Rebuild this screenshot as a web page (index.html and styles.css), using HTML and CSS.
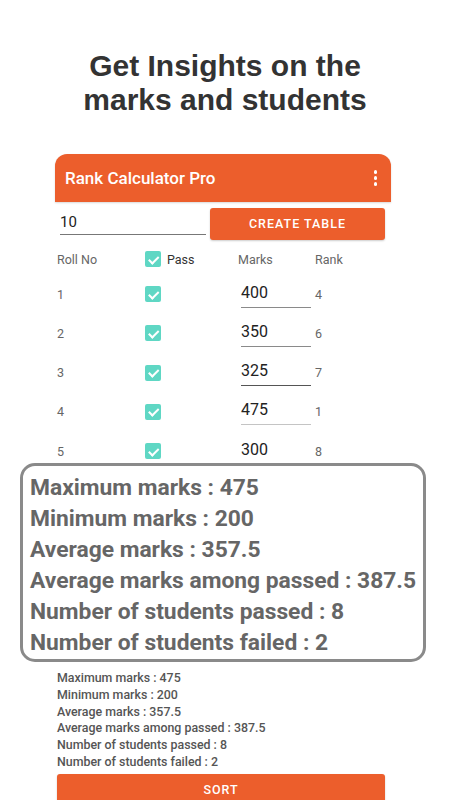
FILE: index.html
```html
<!DOCTYPE html>
<html>
<head>
<meta charset="utf-8">
<link rel="stylesheet" href="styles.css">
</head>
<body>
<h1 class="headline">Get Insights on the<br>marks and students</h1>
<div class="phone">
  <div class="appbar">
    <span class="app-title">Rank Calculator Pro</span>
    <span class="menu-dots"><i></i><i></i><i></i></span>
  </div>
  <div class="content">
    <div class="input-row">
      <div class="count-field">10</div>
      <div class="btn btn-create">CREATE TABLE</div>
    </div>
    <div class="table">
      <div class="trow thead">
        <span class="cell roll">Roll No</span>
        <span class="cell pass"><span class="check"></span><span class="pass-label">Pass</span></span>
        <span class="cell marks-h">Marks</span>
        <span class="cell rank">Rank</span>
      </div>
      <div class="trow"><span class="cell roll">1</span><span class="cell pass"><span class="check"></span></span><span class="cell marks"><span class="mark-field">400</span></span><span class="cell rank">4</span></div>
      <div class="trow"><span class="cell roll">2</span><span class="cell pass"><span class="check"></span></span><span class="cell marks"><span class="mark-field">350</span></span><span class="cell rank">6</span></div>
      <div class="trow"><span class="cell roll">3</span><span class="cell pass"><span class="check"></span></span><span class="cell marks"><span class="mark-field dark">325</span></span><span class="cell rank">7</span></div>
      <div class="trow"><span class="cell roll">4</span><span class="cell pass"><span class="check"></span></span><span class="cell marks"><span class="mark-field light">475</span></span><span class="cell rank">1</span></div>
      <div class="trow"><span class="cell roll">5</span><span class="cell pass"><span class="check"></span></span><span class="cell marks"><span class="mark-field">300</span></span><span class="cell rank">8</span></div>
      <div class="trow"><span class="cell roll">6</span><span class="cell pass"><span class="check"></span></span><span class="cell marks"><span class="mark-field">450</span></span><span class="cell rank">2</span></div>
      <div class="trow"><span class="cell roll">7</span><span class="cell pass"><span class="check"></span></span><span class="cell marks"><span class="mark-field">425</span></span><span class="cell rank">3</span></div>
      <div class="trow"><span class="cell roll">8</span><span class="cell pass"><span class="check"></span></span><span class="cell marks"><span class="mark-field">375</span></span><span class="cell rank">5</span></div>
      <div class="trow"><span class="cell roll">9</span><span class="cell pass"><span class="check off"></span></span><span class="cell marks"><span class="mark-field">275</span></span><span class="cell rank">9</span></div>
      <div class="trow"><span class="cell roll">10</span><span class="cell pass"><span class="check off"></span></span><span class="cell marks"><span class="mark-field">200</span></span><span class="cell rank">10</span></div>
    </div>
    <div class="stats">
      <div>Maximum marks : 475</div>
      <div>Minimum marks : 200</div>
      <div>Average marks : 357.5</div>
      <div>Average marks among passed : 387.5</div>
      <div>Number of students passed : 8</div>
      <div>Number of students failed : 2</div>
    </div>
    <div class="btn btn-sort">SORT</div>
  </div>
</div>
<div class="zoom-box">
  <div>Maximum marks : 475</div>
  <div>Minimum marks : 200</div>
  <div>Average marks : 357.5</div>
  <div>Average marks among passed : 387.5</div>
  <div>Number of students passed : 8</div>
  <div>Number of students failed : 2</div>
</div>
</body>
</html>
```
FILE: styles.css
```css
html, body {
  margin: 0;
  padding: 0;
  background: #ffffff;
}
body {
  width: 450px;
  height: 800px;
  overflow: hidden;
  position: relative;
  font-family: Roboto, "Noto Sans", sans-serif;
}
.headline {
  margin: 0;
  padding-top: 49px;
  font-family: "Liberation Sans", Arial, sans-serif;
  font-weight: bold;
  font-size: 30px;
  line-height: 34px;
  color: #333333;
  text-align: center;
}
.phone {
  margin: 37px 0 0 55px;
  width: 336px;
  background: #ffffff;
}
.appbar {
  height: 48px;
  background: #ec5e2c;
  border-radius: 12px 12px 0 0;
  display: flex;
  align-items: center;
  justify-content: space-between;
  padding: 0 14px 0 10px;
  box-shadow: 0 1px 2px rgba(0,0,0,0.15);
}
.app-title {
  color: #ffffff;
  font-size: 17px;
  font-weight: 500;
}
.menu-dots {
  display: flex;
  flex-direction: column;
  gap: 2.5px;
}
.menu-dots i {
  display: block;
  width: 3.5px;
  height: 3.5px;
  border-radius: 50%;
  background: #ffffff;
}
.input-row {
  display: flex;
  align-items: flex-start;
  margin-top: 6px;
  height: 32px;
}
.count-field {
  margin-left: 5px;
  width: 146px;
  height: 26px;
  border-bottom: 1px solid #777777;
  font-size: 15px;
  line-height: 28px;
  color: #222222;
}
.btn {
  background: #ec5e2c;
  color: #ffffff;
  font-weight: 500;
  text-align: center;
  border-radius: 3px;
  box-shadow: 0 1px 2px rgba(0,0,0,0.2);
}
.btn-create {
  margin-left: 4px;
  width: 175px;
  height: 32px;
  line-height: 32px;
  font-size: 12.5px;
  letter-spacing: 1px;
}
.table {
  margin-top: 4px;
}
.trow {
  display: grid;
  grid-template-columns: 88px 93px 77px 1fr;
  padding-left: 2px;
  height: 39.25px;
  align-items: center;
  font-size: 12.5px;
  color: #666666;
}
.thead {
  height: 30.5px;
}
.cell {
  display: flex;
  align-items: center;
}
.check {
  display: block;
  width: 16px;
  height: 16px;
  border-radius: 2px;
  background: #5fd7c4;
  position: relative;
}
.check::after {
  content: "";
  position: absolute;
  left: 5.5px;
  top: 2.5px;
  width: 3.5px;
  height: 7.5px;
  border: solid #ffffff;
  border-width: 0 2px 2px 0;
  transform: rotate(45deg);
}
.check.off {
  background: #ffffff;
  box-shadow: inset 0 0 0 2px #777777;
}
.check.off::after {
  display: none;
}
.pass-label {
  margin-left: 6px;
  color: #333333;
}
.mark-field {
  margin-left: 3px;
  width: 70px;
  height: 24px;
  border-bottom: 1px solid #8a8a8a;
  font-size: 16px;
  line-height: 20px;
  color: #222222;
  margin-top: 2px;
}
.mark-field.dark {
  border-bottom-color: #555555;
}
.mark-field.light {
  border-bottom-color: #c4c4c4;
}
.stats {
  margin-top: 3px;
  padding-left: 2px;
  font-size: 12.4px;
  font-weight: 500;
  line-height: 16.8px;
  color: #555555;
}
.btn-sort {
  margin: 3px 6px 0 2px;
  height: 32px;
  line-height: 32px;
  font-size: 12.5px;
  letter-spacing: 1px;
}
.zoom-box {
  position: absolute;
  left: 20px;
  top: 463px;
  height: 188px;
  width: 393px;
  border: 3px solid #8a8a8a;
  border-radius: 15px;
  background: #ffffff;
  padding: 5px 0 0 7px;
  box-sizing: content-box;
  display: flex;
  flex-direction: column;
  justify-content: center;
  font-size: 22.8px;
  font-weight: bold;
  line-height: 31px;
  color: #666666;
}
```
